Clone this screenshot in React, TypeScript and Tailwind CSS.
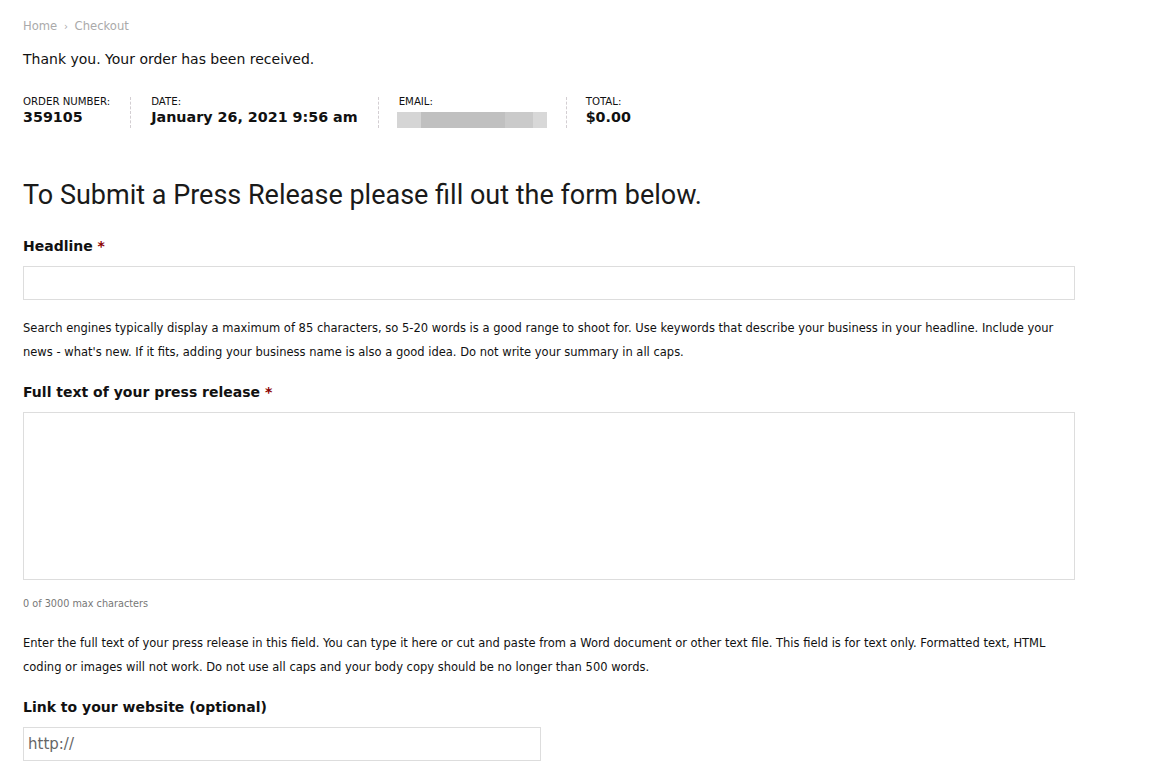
import React from "react";

const body = { fontFamily: '"DejaVu Sans", Verdana, sans-serif' };

function Label({ text, required }: { text: string; required?: boolean }) {
  return (
    <label className="block text-[14px] leading-[20px] font-bold text-[#111]">
      {text}
      {required && <span className="text-[#8b0000]"> *</span>}
    </label>
  );
}

export default function App() {
  return (
    <div className="min-h-[777px] bg-white px-[23px] pt-[16px] text-[#111]" style={body}>
      <nav className="text-[11.6px] leading-[20px] text-[#aaa]">
        Home <span className="mx-[3px] text-[10px]">›</span> Checkout
      </nav>
      <p className="mt-[12px] text-[14px] leading-[20px]">Thank you. Your order has been received.</p>

      <ul className="mt-[28px] flex">
        <li className="mr-[20px] border-r border-dashed border-[#d3ced2] pr-[20px] text-[10.2px] uppercase leading-none">
          Order number:
          <strong className="block text-[14.3px] leading-[21px]">359105</strong>
        </li>
        <li className="mr-[20px] border-r border-dashed border-[#d3ced2] pr-[20px] text-[10.2px] uppercase leading-none">
          Date:
          <strong className="block text-[14.3px] normal-case leading-[21px]">January 26, 2021 9:56 am</strong>
        </li>
        <li className="mr-[19px] border-r border-dashed border-[#d3ced2] pr-[19px] text-[10.2px] uppercase leading-none">
          Email:
          <span className="mt-[5px] ml-[-2px] flex h-[16px] w-[150px]">
            <span className="w-[24px] bg-[#d5d5d5]" />
            <span className="w-[84px] bg-[#c0c0c0]" />
            <span className="w-[28px] bg-[#cacaca]" />
            <span className="w-[14px] bg-[#d8d8d8]" />
          </span>
        </li>
        <li className="text-[10.2px] uppercase leading-none">
          Total:
          <strong className="block text-[14.3px] leading-[21px]">$0.00</strong>
        </li>
      </ul>

      <h2
        className="mt-[51px] text-[27px] leading-[32px] text-[#1a1a1a]"
        style={{ fontFamily: 'Roboto, "Liberation Sans", sans-serif' }}
      >
        To Submit a Press Release please fill out the form below.
      </h2>

      <div className="mt-[25px] w-[1052px]">
        <Label text="Headline" required />
        <input className="mt-[10px] block h-[34px] w-full border border-[#ddd] px-[6px] text-[14px] outline-none" />
        <p className="mt-[16px] text-[11.5px] leading-[24px]">
          Search engines typically display a maximum of 85 characters, so 5-20 words is a good range to shoot for. Use keywords that describe your business in your headline. Include your news - what's new. If it fits, adding your business name is also a good idea. Do not write your summary in all caps.
        </p>

        <div className="mt-[18px]">
          <Label text="Full text of your press release" required />
        </div>
        <textarea className="mt-[10px] block h-[168px] w-full resize-none border border-[#ddd] p-[6px] text-[14px] outline-none" />
        <p className="mt-[17px] text-[9.7px] leading-[14px] text-[#777]">0 of 3000 max characters</p>
        <p className="mt-[20px] text-[11.5px] leading-[24px]">
          Enter the full text of your press release in this field. You can type it here or cut and paste from a Word document or other text file. This field is for text only. Formatted text, HTML coding or images will not work. Do not use all caps and your body copy should be no longer than 500 words.
        </p>

        <div className="mt-[18px]">
          <Label text="Link to your website (optional)" />
        </div>
        <input
          placeholder="http://"
          className="mt-[10px] block h-[34px] w-[518px] border border-[#ddd] px-[4px] text-[15px] outline-none placeholder:text-[#666]"
          style={body}
        />
      </div>
    </div>
  );
}
